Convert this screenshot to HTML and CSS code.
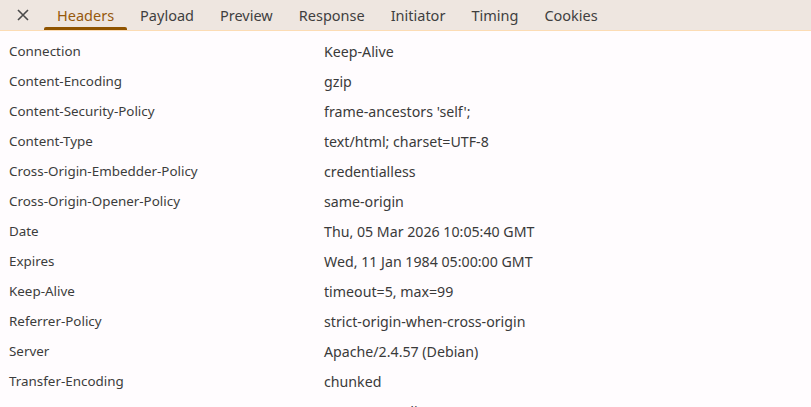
FILE: index.html
```html
<!DOCTYPE html>
<html>
<head>
<meta charset="utf-8">
<link rel="stylesheet" href="styles.css">
</head>
<body>
<div class="tabbar">
  <button class="close" aria-label="Close">
    <svg width="12" height="12" viewBox="0 0 12 12"><path d="M1 1L11 11M11 1L1 11" stroke="#4a4a4a" stroke-width="1.6" fill="none"/></svg>
  </button>
  <div class="tab active">Headers</div>
  <div class="tab">Payload</div>
  <div class="tab">Preview</div>
  <div class="tab">Response</div>
  <div class="tab">Initiator</div>
  <div class="tab">Timing</div>
  <div class="tab">Cookies</div>
</div>
<div class="headers">
  <div class="name">Connection</div><div class="value">Keep-Alive</div>
  <div class="name">Content-Encoding</div><div class="value">gzip</div>
  <div class="name">Content-Security-Policy</div><div class="value">frame-ancestors 'self';</div>
  <div class="name">Content-Type</div><div class="value">text/html; charset=UTF-8</div>
  <div class="name">Cross-Origin-Embedder-Policy</div><div class="value">credentialless</div>
  <div class="name">Cross-Origin-Opener-Policy</div><div class="value">same-origin</div>
  <div class="name">Date</div><div class="value">Thu, 05 Mar 2026 10:05:40 GMT</div>
  <div class="name">Expires</div><div class="value">Wed, 11 Jan 1984 05:00:00 GMT</div>
  <div class="name">Keep-Alive</div><div class="value">timeout=5, max=99</div>
  <div class="name">Referrer-Policy</div><div class="value">strict-origin-when-cross-origin</div>
  <div class="name">Server</div><div class="value">Apache/2.4.57 (Debian)</div>
  <div class="name">Transfer-Encoding</div><div class="value">chunked</div>
  <div class="name">Vary</div><div class="value">Accept-Encoding</div>
</div>
</body>
</html>
```
FILE: styles.css
```css
html, body {
  margin: 0;
  padding: 0;
  height: 100%;
  overflow: hidden;
}
body {
  background: #fffcfe;
  font-family: "Noto Sans", "Open Sans", sans-serif;
  color: #3b3b3b;
}
.tabbar {
  display: flex;
  align-items: stretch;
  height: 30px;
  background: #eee6e0;
  border-bottom: 1px solid #fcdcb4;
}
.close {
  width: 44px;
  padding: 0 0 0 1px;
  border: none;
  background: transparent;
  display: flex;
  align-items: center;
  justify-content: center;
}
.tab {
  position: relative;
  padding: 0 13px 1px;
  display: flex;
  align-items: center;
  font-size: 14.5px;
  color: #3f3f3f;
}
.tab.active {
  color: #96590c;
}
.tab.active::after {
  content: "";
  position: absolute;
  left: 0;
  right: 0;
  bottom: 0;
  height: 3px;
  background: #8f5400;
  border-radius: 2px 2px 0 0;
}
.headers {
  display: grid;
  grid-template-columns: 315px 1fr;
  grid-auto-rows: 30px;
  padding: 5px 0 0 9px;
}
.name, .value {
  display: flex;
  align-items: center;
}
.name {
  font-size: 13.4px;
  color: #3c3c3c;
}
.value {
  font-size: 14.2px;
  color: #3a3a3a;
}
```
